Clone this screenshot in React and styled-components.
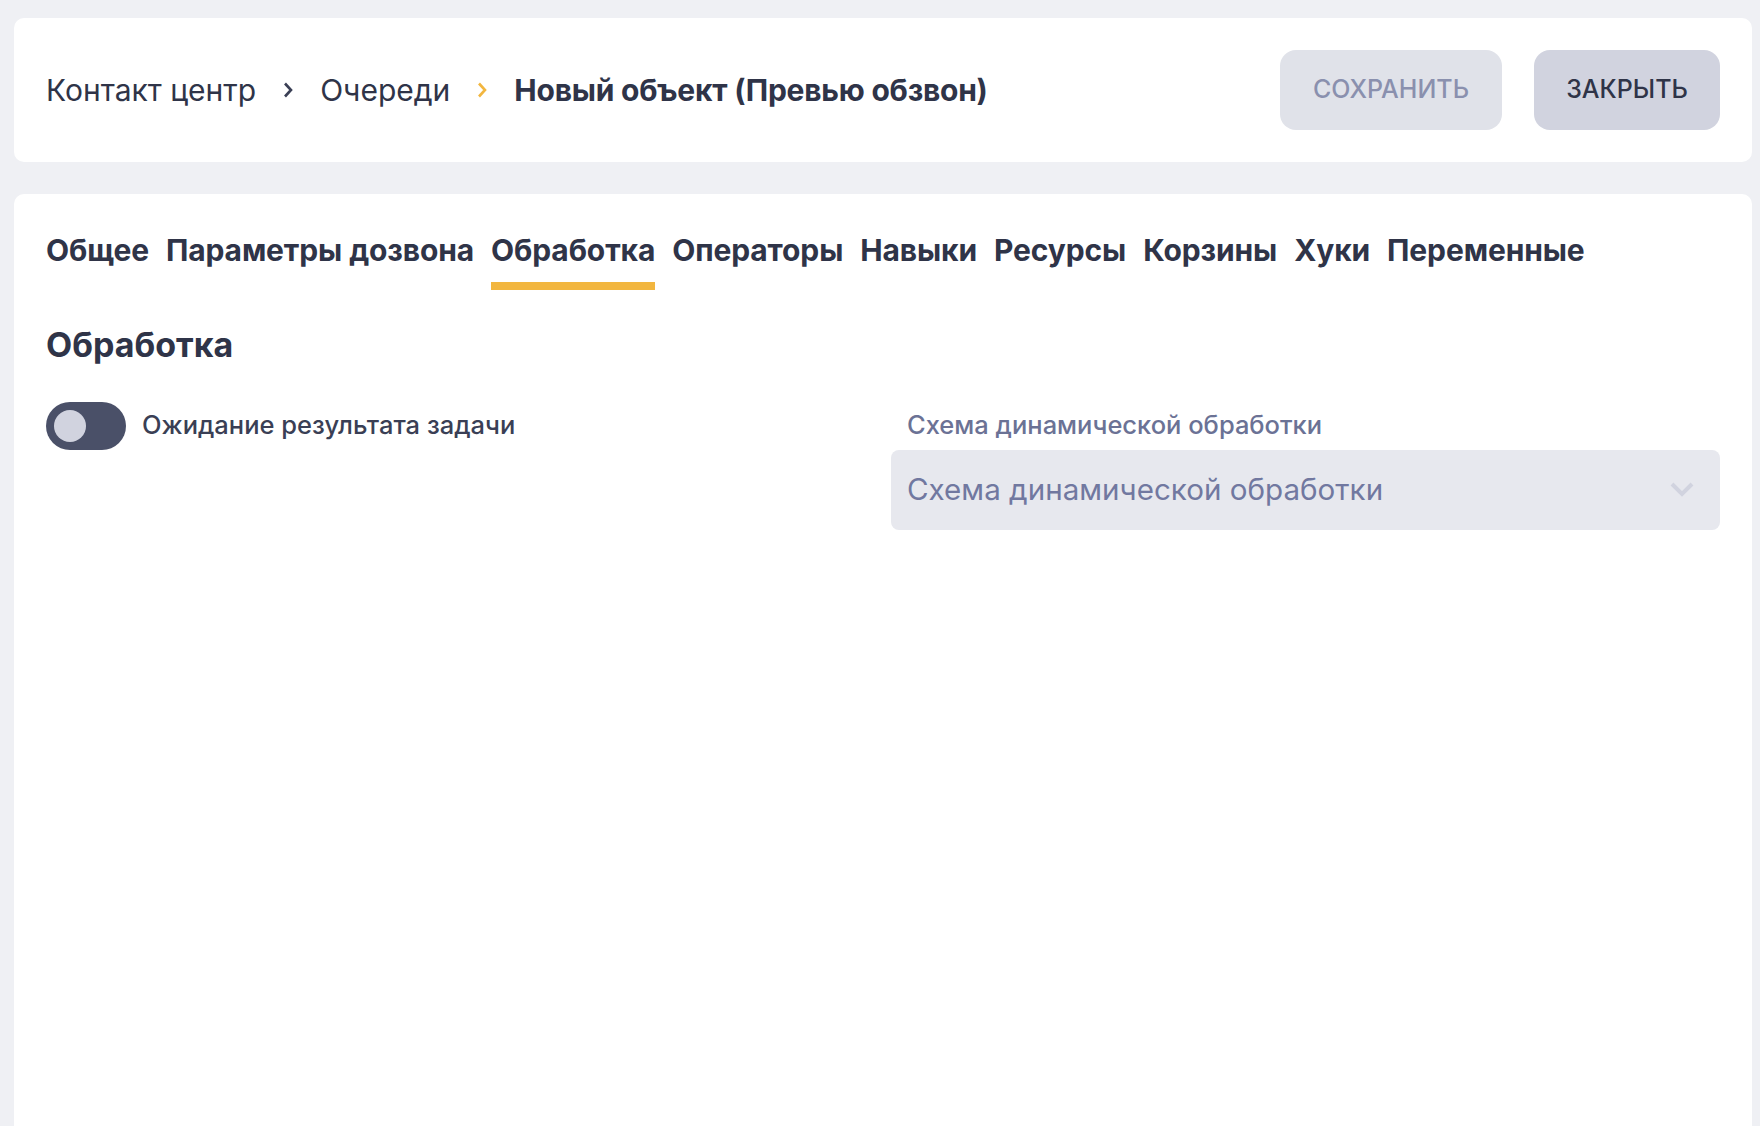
import React from 'react';
import styled, { createGlobalStyle } from 'styled-components';

const GlobalStyle = createGlobalStyle`
    html, body, #root {
        height: 100%;
        margin: 0;
    }
    body {
        background: #eff0f4;
        color: #2f3448;
        font-family: Inter, 'Noto Sans', sans-serif;
        overflow: hidden;
    }
`;

const Page = styled.div`
    display: flex;
    flex-direction: column;
    gap: 32px;
    height: 100%;
    box-sizing: border-box;
    padding: 18px 8px 0 14px;
`;

const Card = styled.div`
    background: #fff;
    border-radius: 10px;
    padding: 32px;
`;

const Header = styled(Card)`
    display: flex;
    align-items: center;
    justify-content: space-between;
`;

const Crumbs = styled.div`
    display: flex;
    align-items: center;
    gap: 27px;
    font-size: 30px;
`;

const Crumb = styled.span`
    font-weight: ${(p) => (p.$current ? 700 : 400)};
    letter-spacing: ${(p) => (p.$current ? '-0.24px' : '0')};
`;

const Actions = styled.div`
    display: flex;
    gap: 32px;
`;

const Button = styled.button`
    height: 80px;
    width: ${(p) => p.$width}px;
    padding: 0 0 2px;
    border: 0;
    border-radius: 16px;
    font: 500 25px Inter, sans-serif;
    background: ${(p) => (p.$muted ? '#e0e2e9' : '#d1d3df')};
    color: ${(p) => (p.$muted ? '#8a90ae' : '#2f3448')};
`;

const Body = styled(Card)`
    flex: 1;
    border-radius: 10px 10px 0 0;
`;

const Tabs = styled.div`
    display: flex;
    gap: 17px;
`;

const Tab = styled.div`
    font-size: 30px;
    font-weight: 700;
    letter-spacing: -0.12px;
    line-height: 48px;
    padding-bottom: 8px;
    border-bottom: 8px solid ${(p) => (p.$active ? '#f2b63f' : 'transparent')};
`;

const Title = styled.h2`
    margin: 35px 0 37px;
    font-size: 34px;
    font-weight: 700;
    line-height: 40px;
`;

const Form = styled.div`
    display: grid;
    grid-template-columns: 1fr 1fr;
    gap: 16px;
`;

const ToggleRow = styled.div`
    display: flex;
    align-items: center;
    gap: 16px;
    height: 48px;
    font-size: 25.5px;
    font-weight: 500;
    color: #3a3f55;
`;

const Toggle = styled.div`
    display: flex;
    align-items: center;
    width: 80px;
    height: 48px;
    box-sizing: border-box;
    padding-left: 8px;
    border-radius: 24px;
    background: #4a5068;
`;

const Knob = styled.div`
    width: 32px;
    height: 32px;
    border-radius: 50%;
    background: #d1d3df;
`;

const ToggleText = styled.span`
    padding-bottom: 4px;
`;

const FieldLabel = styled.div`
    padding: 0 0 2px 16px;
    font-size: 25.5px;
    font-weight: 500;
    line-height: 46px;
    color: #6b7295;
`;

const Select = styled.div`
    display: flex;
    align-items: center;
    justify-content: space-between;
    height: 80px;
    box-sizing: border-box;
    padding: 0 26px 2px 16px;
    border-radius: 8px;
    background: #e7e8ee;
    font-size: 29.6px;
    color: #7178a0;
`;

const Chevron = ({ color }) => (
    <svg width='10' height='16' viewBox='0 0 10 16' fill='none'>
        <path d='M2 1.5L8 8L2 14.5' stroke={color} strokeWidth='2.6' />
    </svg>
);

const tabs = ['Общее', 'Параметры дозвона', 'Обработка', 'Операторы', 'Навыки', 'Ресурсы', 'Корзины', 'Хуки', 'Переменные'];

const App = () => (
    <Page>
        <GlobalStyle />
        <Header>
            <Crumbs>
                <Crumb>Контакт центр</Crumb>
                <Chevron color='#3a3f55' />
                <Crumb>Очереди</Crumb>
                <Chevron color='#f2b63f' />
                <Crumb $current>Новый объект (Превью обзвон)</Crumb>
            </Crumbs>
            <Actions>
                <Button $muted $width={222}>СОХРАНИТЬ</Button>
                <Button $width={186}>ЗАКРЫТЬ</Button>
            </Actions>
        </Header>
        <Body>
            <Tabs>
                {tabs.map((t) => (
                    <Tab key={t} $active={t === 'Обработка'}>{t}</Tab>
                ))}
            </Tabs>
            <Title>Обработка</Title>
            <Form>
                <ToggleRow>
                    <Toggle><Knob /></Toggle>
                    <ToggleText>Ожидание результата задачи</ToggleText>
                </ToggleRow>
                <div>
                    <FieldLabel>Схема динамической обработки</FieldLabel>
                    <Select>
                        Схема динамической обработки
                        <svg width='24' height='16' viewBox='0 0 24 16' fill='none'>
                            <path d='M2 3L12 13L22 3' stroke='#d1d3df' strokeWidth='4' />
                        </svg>
                    </Select>
                </div>
            </Form>
        </Body>
    </Page>
);

export default App;
